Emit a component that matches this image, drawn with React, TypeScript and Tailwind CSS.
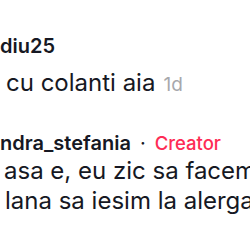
export default function App() {
  return (
    <div
      className="w-[250px] h-[250px] overflow-hidden bg-white text-[#161823]"
      style={{ fontFamily: "Inter, 'Noto Sans', sans-serif" }}
    >
      <div className="pt-[32px]">
        <div className="text-[20px] leading-[28px] font-semibold whitespace-nowrap">diu25</div>
        <div className="mt-[8px] pl-[6px] text-[24px] leading-[30px] whitespace-nowrap">
          cu colanti aia
          <span className="ml-[8px] text-[19px] text-[#a7a8ac]">1d</span>
        </div>
      </div>
      <div className="mt-[29px]">
        <div className="flex items-baseline text-[20px] leading-[28px] font-semibold whitespace-nowrap">
          <span>ndra_stefania</span>
          <span className="mx-[9px] font-normal">·</span>
          <span className="text-[18.5px] font-medium text-[#fe2c55]">Creator</span>
        </div>
        <div className="mt-[-1px] text-[24px] leading-[30px] whitespace-nowrap">
          <div className="pl-[4px]">asa e, eu zic sa facem</div>
          <div className="pl-[5px]">lana sa iesim la alergat</div>
        </div>
      </div>
    </div>
  );
}
